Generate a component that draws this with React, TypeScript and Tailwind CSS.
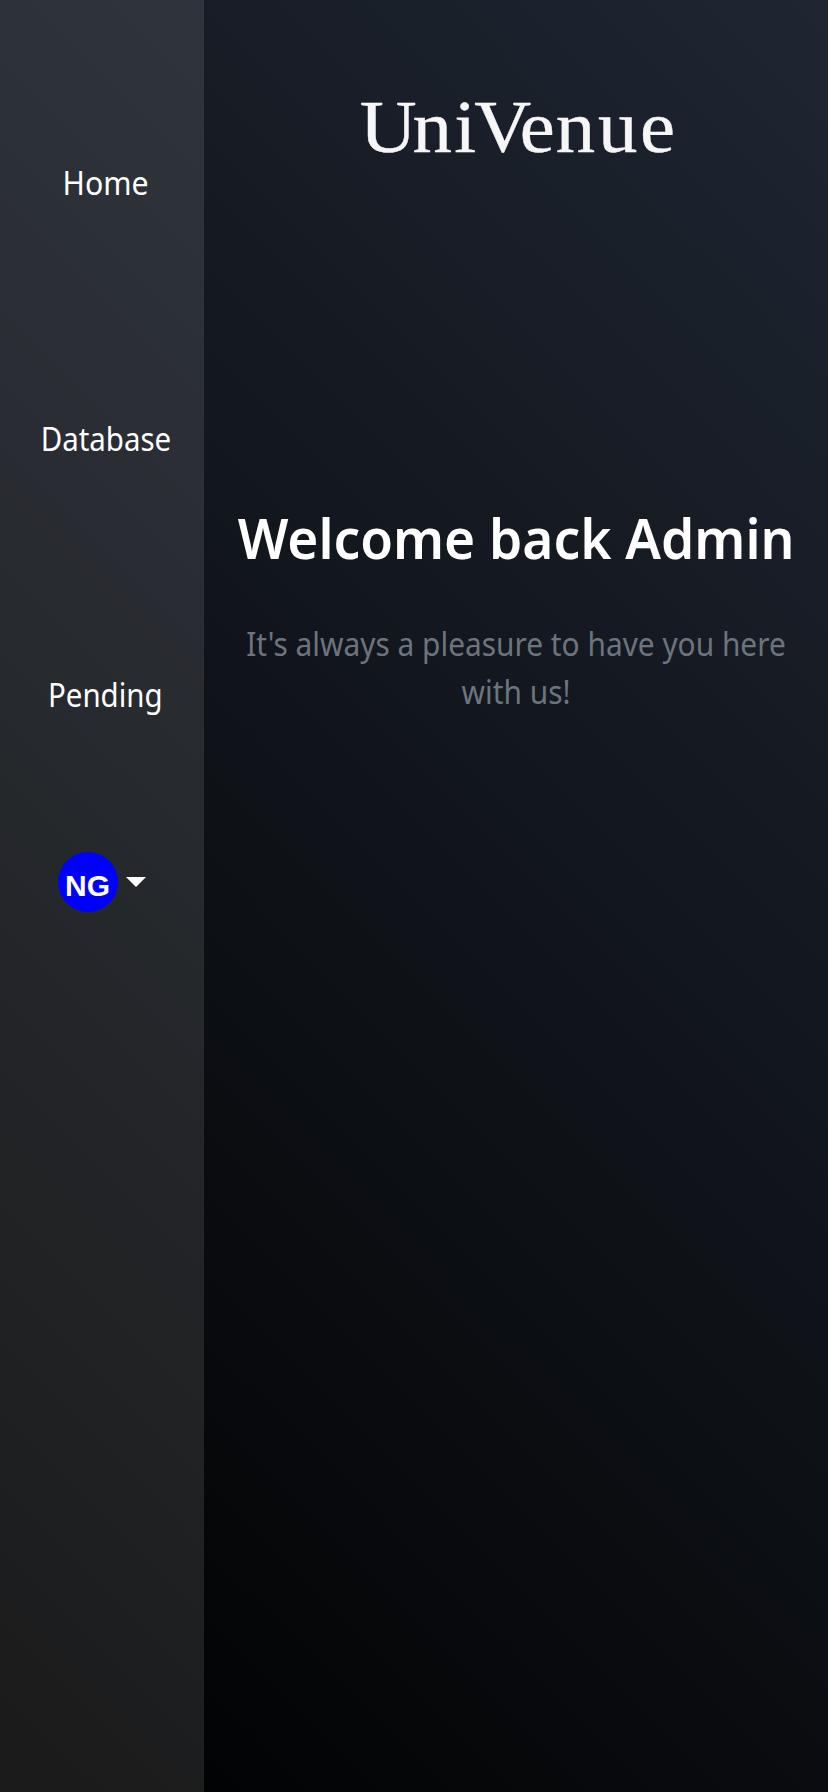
const navItems = [
  { label: "Home", scale: "scale-x-[0.945]" },
  { label: "Database", scale: "scale-x-[0.92]" },
  { label: "Pending", scale: "scale-x-[0.92]" },
];

function Sidebar() {
  return (
    <aside className="flex w-[204px] shrink-0 flex-col items-center border-r border-white/1 bg-[#f7f6f4]/11 pl-[8px]">
      <nav className="flex flex-col items-center pt-[159px]">
        {navItems.map((item) => (
          <a
            key={item.label}
            href="#"
            className={`mb-[208px] flex h-12 items-center justify-center whitespace-nowrap text-[32px] leading-[48px] text-white ${item.scale}`}
          >
            {item.label}
          </a>
        ))}
      </nav>
      <button className="-mt-[75px] mr-[8px] flex items-center gap-[8px]">
        <span className="flex size-[60px] items-center justify-center rounded-full bg-[#0000ff] pt-[8px] font-['Liberation_Sans',Arial,sans-serif] text-[30px] leading-none font-bold text-white">
          NG
        </span>
        <span className="size-0 border-x-[10px] border-t-[10px] border-x-transparent border-t-white" />
      </button>
    </aside>
  );
}

function Logo() {
  return (
    <svg width="320" height="80" viewBox="0 0 320 80" className="overflow-visible" aria-label="UniVenue">
      <text
        x="3.5 53 92.2 111 153.8 187.5 227.2 266.6"
        y="62"
        transform="scale(1.065 1)"
        fill="#f6f6f6"
        stroke="#f6f6f6"
        strokeWidth="0.4"
        className="font-['Liberation_Serif',serif] text-[74px]"
      >
        UniVenue
      </text>
    </svg>
  );
}

export default function App() {
  return (
    <div className="flex min-h-[1792px] w-full bg-[linear-gradient(45deg,#000000,#1f2632)] font-['Noto_Sans','Open_Sans',sans-serif]">
      <Sidebar />
      <main className="flex min-w-0 flex-1 flex-col items-center pt-[90px]">
        <Logo />
        <h1 className="mt-[333px] scale-x-[0.95] text-[56px] leading-[68px] font-semibold whitespace-nowrap text-white">
          Welcome back Admin
        </h1>
        <p className="mt-[49px] w-[600px] scale-x-[0.933] text-center text-[32px] leading-[48px] text-[#6c757d]">
          It's always a pleasure to have you here with us!
        </p>
      </main>
    </div>
  );
}
